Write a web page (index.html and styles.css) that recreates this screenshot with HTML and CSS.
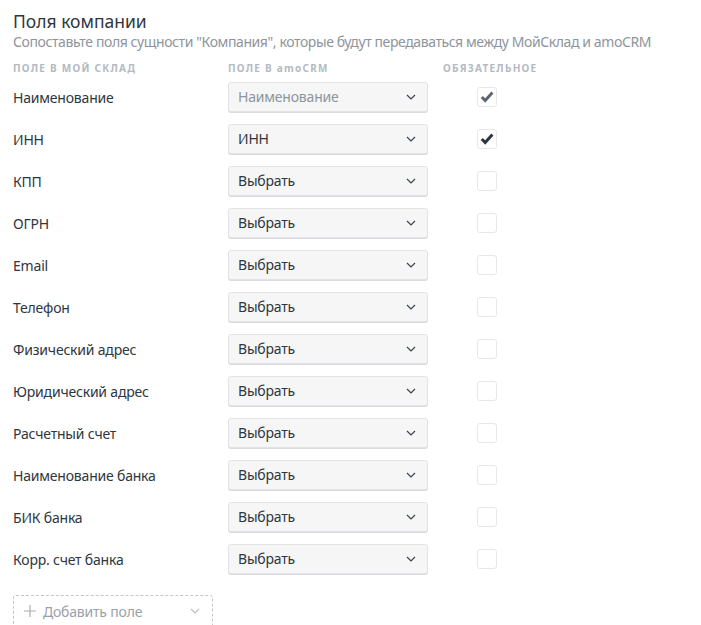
FILE: index.html
```html
<!DOCTYPE html>
<html lang="ru">
<head>
<meta charset="utf-8">
<link rel="stylesheet" href="styles.css">
</head>
<body>
<div class="panel">
  <h2 class="title">Поля компании</h2>
  <p class="subtitle">Сопоставьте поля сущности "Компания", которые будут передаваться между МойСклад и amoCRM</p>
  <div class="heads">
    <div class="head c1">ПОЛЕ В МОЙ СКЛАД</div>
    <div class="head c2">ПОЛЕ В amoCRM</div>
    <div class="head c3">ОБЯЗАТЕЛЬНОЕ</div>
  </div>
  <div class="grid">
    <div class="label">Наименование</div>
    <div class="select disabled"><span>Наименование</span><svg class="chev" viewBox="0 0 10 6"><path d="M1 1l4 4 4-4"/></svg></div>
    <div class="cbcell"><span class="cb"><svg viewBox="0 0 14 12"><path class="tick grey" d="M1.8 6l3.4 3.6 7.2-8"/></svg></span></div>

    <div class="label">ИНН</div>
    <div class="select"><span>ИНН</span><svg class="chev" viewBox="0 0 10 6"><path d="M1 1l4 4 4-4"/></svg></div>
    <div class="cbcell"><span class="cb"><svg viewBox="0 0 14 12"><path class="tick" d="M1.8 6l3.4 3.6 7.2-8"/></svg></span></div>

    <div class="label">КПП</div>
    <div class="select"><span>Выбрать</span><svg class="chev" viewBox="0 0 10 6"><path d="M1 1l4 4 4-4"/></svg></div>
    <div class="cbcell"><span class="cb"></span></div>

    <div class="label">ОГРН</div>
    <div class="select"><span>Выбрать</span><svg class="chev" viewBox="0 0 10 6"><path d="M1 1l4 4 4-4"/></svg></div>
    <div class="cbcell"><span class="cb"></span></div>

    <div class="label">Email</div>
    <div class="select"><span>Выбрать</span><svg class="chev" viewBox="0 0 10 6"><path d="M1 1l4 4 4-4"/></svg></div>
    <div class="cbcell"><span class="cb"></span></div>

    <div class="label">Телефон</div>
    <div class="select"><span>Выбрать</span><svg class="chev" viewBox="0 0 10 6"><path d="M1 1l4 4 4-4"/></svg></div>
    <div class="cbcell"><span class="cb"></span></div>

    <div class="label">Физический адрес</div>
    <div class="select"><span>Выбрать</span><svg class="chev" viewBox="0 0 10 6"><path d="M1 1l4 4 4-4"/></svg></div>
    <div class="cbcell"><span class="cb"></span></div>

    <div class="label">Юридический адрес</div>
    <div class="select"><span>Выбрать</span><svg class="chev" viewBox="0 0 10 6"><path d="M1 1l4 4 4-4"/></svg></div>
    <div class="cbcell"><span class="cb"></span></div>

    <div class="label">Расчетный счет</div>
    <div class="select"><span>Выбрать</span><svg class="chev" viewBox="0 0 10 6"><path d="M1 1l4 4 4-4"/></svg></div>
    <div class="cbcell"><span class="cb"></span></div>

    <div class="label">Наименование банка</div>
    <div class="select"><span>Выбрать</span><svg class="chev" viewBox="0 0 10 6"><path d="M1 1l4 4 4-4"/></svg></div>
    <div class="cbcell"><span class="cb"></span></div>

    <div class="label">БИК банка</div>
    <div class="select"><span>Выбрать</span><svg class="chev" viewBox="0 0 10 6"><path d="M1 1l4 4 4-4"/></svg></div>
    <div class="cbcell"><span class="cb"></span></div>

    <div class="label">Корр. счет банка</div>
    <div class="select"><span>Выбрать</span><svg class="chev" viewBox="0 0 10 6"><path d="M1 1l4 4 4-4"/></svg></div>
    <div class="cbcell"><span class="cb"></span></div>
  </div>
  <div class="add">
    <svg class="plus" viewBox="0 0 12 12"><path d="M6 0v12M0 6h12"/></svg>
    <span class="addtext">Добавить поле</span>
    <svg class="chev light" viewBox="0 0 10 6"><path d="M1 1l4 4 4-4"/></svg>
  </div>
</div>
</body>
</html>
```

FILE: styles.css
```css
html, body {
  margin: 0;
  padding: 0;
  background: #ffffff;
}
body {
  font-family: "Noto Sans", "Open Sans", sans-serif;
  color: #2e3640;
}
.panel {
  padding: 10px 13px 0 13px;
}
.title {
  margin: 0;
  font-size: 17.5px;
  font-weight: 400;
  line-height: 22px;
  color: #2e3640;
}
.subtitle {
  margin: 0;
  font-size: 14px;
  line-height: 20px;
  color: #8e949c;
  letter-spacing: -0.4px;
}
.heads {
  display: flex;
  margin-top: 10px;
  height: 12px;
}
.head {
  font-size: 10px;
  font-weight: 700;
  letter-spacing: 1.25px;
  color: #b4bac1;
  line-height: 12px;
}
.head.c1 { width: 215px; }
.head.c2 { width: 215px; }
.grid {
  display: grid;
  grid-template-columns: 215px 200px 96px;
  grid-auto-rows: 31px;
  row-gap: 11px;
  margin-top: 7px;
  align-items: center;
}
.label {
  font-size: 14px;
  letter-spacing: -0.2px;
  color: #2e3640;
  padding-top: 1px;
}
.select {
  height: 30px;
  box-sizing: border-box;
  border: 1px solid #e1e3e6;
  border-radius: 3px;
  background: #f6f6f6;
  box-shadow: 0 1px 0 #d9dcdf;
  display: flex;
  align-items: center;
  justify-content: space-between;
  padding: 0 11px 0 9px;
  font-size: 14px;
  letter-spacing: -0.2px;
  color: #2e3640;
}
.select.disabled {
  color: #8e949c;
}
.chev {
  width: 10px;
  height: 6px;
  fill: none;
  stroke: #3a424b;
  stroke-width: 1.2;
}
.chev.light {
  stroke: #b8bec5;
}
.cbcell {
  display: flex;
  padding-left: 49px;
}
.cb {
  width: 20px;
  height: 20px;
  box-sizing: border-box;
  border: 1px solid #e6e8ea;
  border-radius: 3px;
  background: #fff;
  display: flex;
  align-items: center;
  justify-content: center;
}
.cb svg {
  width: 14px;
  height: 12px;
}
.tick {
  fill: none;
  stroke: #2f3640;
  stroke-width: 3;
}
.tick.grey {
  stroke: #5f6670;
}
.add {
  margin-top: 21px;
  width: 200px;
  height: 32px;
  box-sizing: border-box;
  border: 1px dashed #c3c7cc;
  border-radius: 3px;
  display: flex;
  align-items: center;
  padding: 0 12px 0 10px;
  color: #9aa1a9;
  font-size: 14px;
}
.plus {
  width: 12px;
  height: 12px;
  fill: none;
  stroke: #a9afb6;
  stroke-width: 1.2;
  margin-right: 7px;
}
.addtext {
  flex: 1;
  letter-spacing: -0.2px;
}
```
